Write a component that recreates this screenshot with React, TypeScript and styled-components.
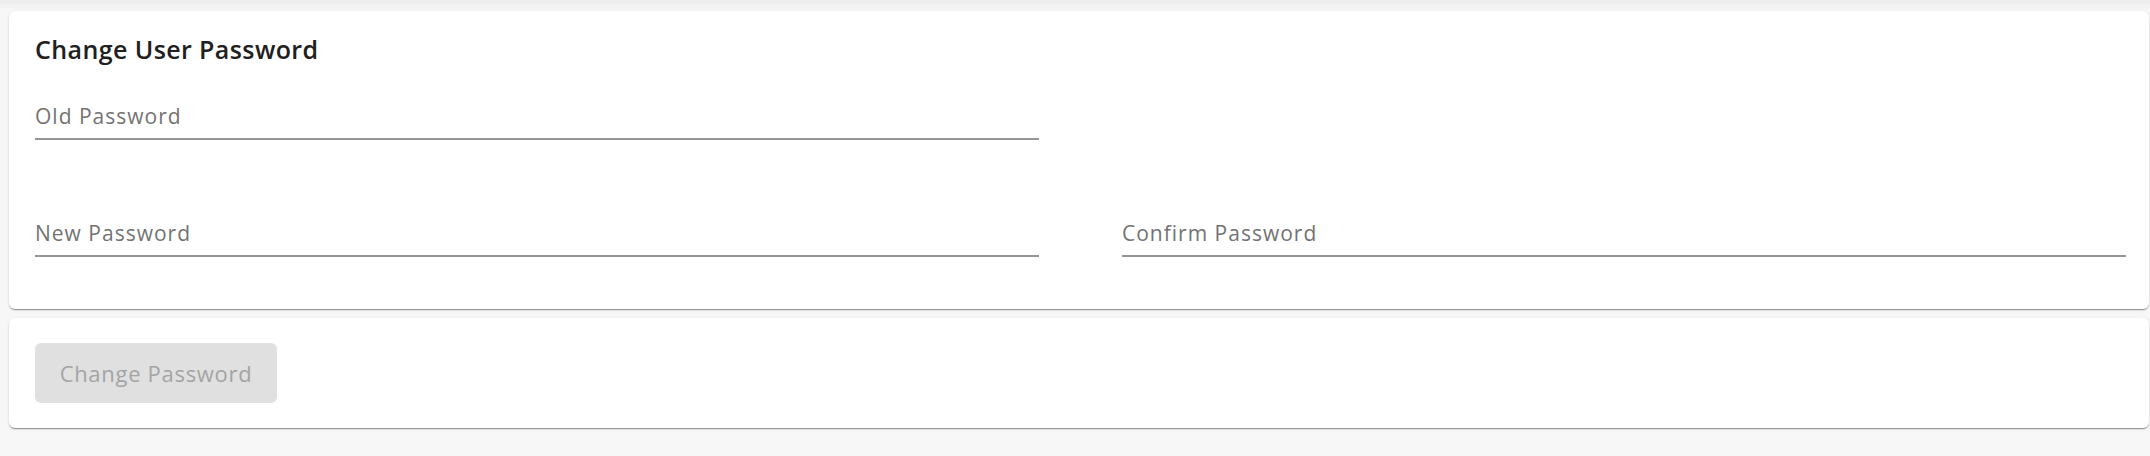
import React from 'react';
import styled, { createGlobalStyle } from 'styled-components';

const GlobalStyle = createGlobalStyle`
  html, body {
    margin: 0;
    padding: 0;
    background: #f7f7f7;
    font-family: "Open Sans", "Noto Sans", "Liberation Sans", sans-serif;
  }
`;

const Page = styled.div`
  display: flex;
  flex-direction: column;
  gap: 9px;
  padding: 11px 1px 28px 9px;
  min-height: 456px;
  box-sizing: border-box;
  background: linear-gradient(#ececec, #f7f7f7 10px);
`;

const Card = styled.div<{ $pad: string }>`
  background: #fff;
  border-radius: 6px;
  padding: ${(p) => p.$pad};
  box-shadow: 0 2px 1px -1px rgba(0, 0, 0, 0.25), 0 1px 1px 0 rgba(0, 0, 0, 0.16),
    0 1px 3px 0 rgba(0, 0, 0, 0.12);
`;

const Title = styled.h2`
  margin: 0;
  font-size: 25px;
  line-height: 32px;
  font-weight: 600;
  letter-spacing: 0.4px;
  color: #202020;
`;

const Grid = styled.div`
  display: grid;
  grid-template-columns: 1fr 1fr;
  column-gap: 83px;
  row-gap: 67px;
  margin-top: 25px;
`;

const Field = styled.div<{ $col?: number }>`
  grid-column: ${(p) => p.$col ?? 'auto'};
  height: 50px;
  display: flex;
  align-items: flex-end;
  padding-bottom: 10px;
  box-sizing: border-box;
  border-bottom: 2px solid #959595;
`;

const Label = styled.span`
  font-size: 21px;
  line-height: 24px;
  letter-spacing: 1px;
  color: #737373;
`;

const Button = styled.button`
  width: 242px;
  height: 60px;
  border: none;
  border-radius: 6px;
  background: #e0e0e0;
  color: #a4a4a4;
  font-family: inherit;
  font-size: 22px;
  letter-spacing: 0.7px;
  padding: 0;
`;

export default function App() {
  return (
    <>
      <GlobalStyle />
      <Page>
        <Card $pad="22px 23px 52px 26px">
          <Title>Change User Password</Title>
          <Grid>
            <Field $col={1}>
              <Label>Old Password</Label>
            </Field>
            <Field $col={1}>
              <Label>New Password</Label>
            </Field>
            <Field>
              <Label>Confirm Password</Label>
            </Field>
          </Grid>
        </Card>
        <Card $pad="25px 26px 25px">
          <Button disabled>Change Password</Button>
        </Card>
      </Page>
    </>
  );
}
